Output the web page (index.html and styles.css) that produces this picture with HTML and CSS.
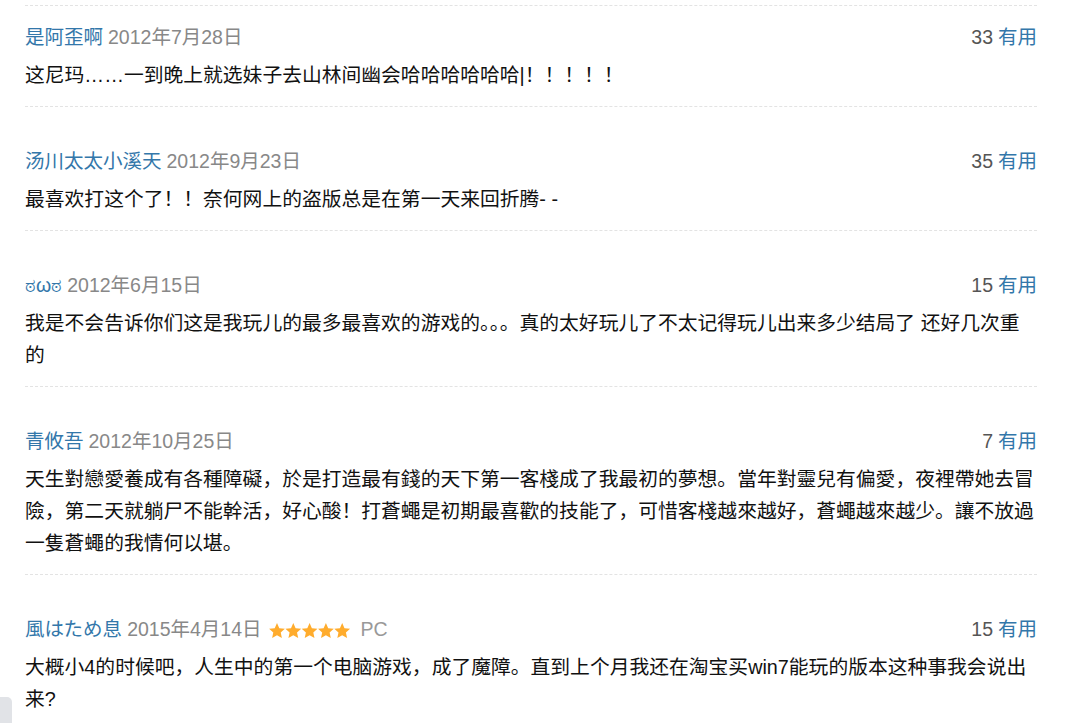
FILE: index.html
```html
<!DOCTYPE html>
<html lang="zh">
<head>
<meta charset="utf-8">
<title>短评</title>
<link rel="stylesheet" href="styles.css">
</head>
<body>
<div class="page">
  <ul class="comments">
    <li class="comment">
      <div class="info">
        <span class="meta"><a class="author">是阿歪啊</a><span class="date">2012年7月28日</span></span>
        <span class="votes"><span class="count">33</span><a class="useful">有用</a></span>
      </div>
      <p class="text">这尼玛……一到晚上就选妹子去山林间幽会哈哈哈哈哈哈|！！！！！</p>
    </li>
    <li class="comment">
      <div class="info">
        <span class="meta"><a class="author">汤川太太小溪天</a><span class="date">2012年9月23日</span></span>
        <span class="votes"><span class="count">35</span><a class="useful">有用</a></span>
      </div>
      <p class="text">最喜欢打这个了！！奈何网上的盗版总是在第一天来回折腾- -</p>
    </li>
    <li class="comment">
      <div class="info">
        <span class="meta"><a class="author">ಠωಠ</a><span class="date">2012年6月15日</span></span>
        <span class="votes"><span class="count">15</span><a class="useful">有用</a></span>
      </div>
      <p class="text">我是不会告诉你们这是我玩儿的最多最喜欢的游戏的。。。真的太好玩儿了不太记得玩儿出来多少结局了 还好几次重的</p>
    </li>
    <li class="comment">
      <div class="info">
        <span class="meta"><a class="author">青攸吾</a><span class="date">2012年10月25日</span></span>
        <span class="votes"><span class="count">7</span><a class="useful">有用</a></span>
      </div>
      <p class="text">天生對戀愛養成有各種障礙，於是打造最有錢的天下第一客棧成了我最初的夢想。當年對靈兒有偏愛，夜裡帶她去冒險，第二天就躺尸不能幹活，好心酸！打蒼蠅是初期最喜歡的技能了，可惜客棧越來越好，蒼蠅越來越少。讓不放過一隻蒼蠅的我情何以堪。</p>
    </li>
    <li class="comment">
      <div class="info">
        <span class="meta"><a class="author">風はため息</a><span class="date">2015年4月14日</span>
          <svg class="stars" width="82" height="16" viewBox="0 0 82 16" aria-label="5星">
            <defs>
              <polygon id="star" points="8,0.1 10.29,5.24 15.89,5.84 11.71,9.61 12.88,15.11 8,12.3 3.12,15.11 4.29,9.61 0.11,5.84 5.71,5.24"/>
            </defs>
            <use href="#star" x="0"/>
            <use href="#star" x="16.3"/>
            <use href="#star" x="32.6"/>
            <use href="#star" x="48.9"/>
            <use href="#star" x="65.2"/>
          </svg>
          <span class="platform">PC</span></span>
        <span class="votes"><span class="count">15</span><a class="useful">有用</a></span>
      </div>
      <p class="text">大概小4的时候吧，人生中的第一个电脑游戏，成了魔障。直到上个月我还在淘宝买win7能玩的版本这种事我会说出来?</p>
    </li>
  </ul>
</div>
<div class="side-tab"></div>
</body>
</html>
```

FILE: styles.css
```css
html, body {
  margin: 0;
  padding: 0;
  background: #fff;
}

body {
  font-family: "Liberation Sans", "Noto Sans CJK SC", "Noto Sans", sans-serif;
  color: #111;
  overflow: hidden;
}

.page {
  padding: 5px 0 0 25px;
  width: 1012px;
}

.comments {
  list-style: none;
  margin: 0;
  padding: 0;
  border-top: 1px dashed #e3e3e3;
}

.comment {
  padding: 39px 0 15px;
  border-bottom: 1px dashed #e3e3e3;
}

.comment:first-child {
  padding-top: 16px;
}

.info {
  display: flex;
  justify-content: space-between;
  align-items: center;
  height: 31px;
  line-height: 31px;
  font-size: 19.5px;
  margin-bottom: 6px;
}

.meta {
  display: flex;
  align-items: center;
}

.author {
  color: #3377aa;
  text-decoration: none;
}

.date {
  color: #888;
  margin-left: 5px;
}

.stars {
  fill: #ffac2d;
  margin: 0 10px 0 7px;
  position: relative;
  top: 1px;
}

.platform {
  color: #999;
}

.votes {
  display: flex;
  align-items: center;
}

.count {
  color: #555;
  margin-right: 5px;
}

.useful {
  color: #3377aa;
}

.text {
  margin: 0;
  font-size: 19.8px;
  line-height: 32px;
  color: #111;
  word-break: break-all;
}

.side-tab {
  position: fixed;
  left: 0;
  top: 697px;
  width: 12px;
  height: 40px;
  background: #e1e3e7;
  border-radius: 0 5px 0 0;
}
```
